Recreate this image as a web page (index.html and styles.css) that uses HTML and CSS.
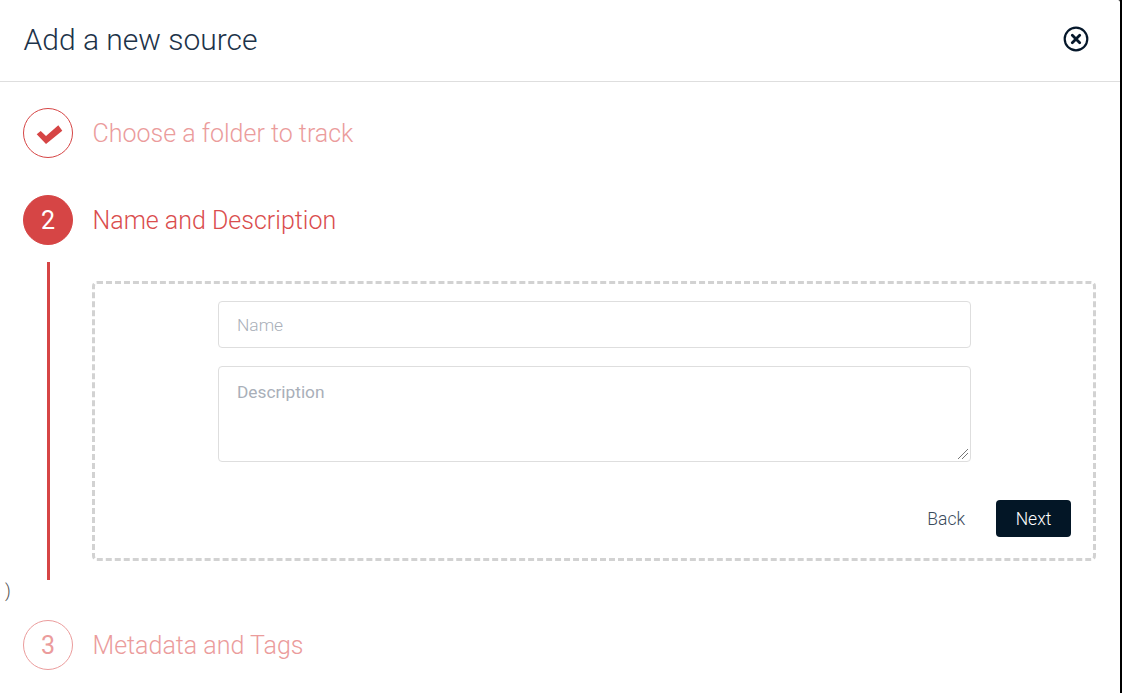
FILE: index.html
```html
<!DOCTYPE html>
<html lang="en">
<head>
<meta charset="utf-8">
<title>Add a new source</title>
<link rel="stylesheet" href="styles.css">
</head>
<body>
<div class="modal">
  <header class="modal-header">
    <h1 class="modal-title">Add a new source</h1>
    <button class="close" type="button" aria-label="Close">
      <svg viewBox="0 0 26 26" width="26" height="26" fill="none" stroke="#06182b">
        <circle cx="13" cy="13" r="11.3" stroke-width="2.2"/>
        <path d="M9.3 9.3l7.4 7.4M16.7 9.3l-7.4 7.4" stroke-width="2.8" stroke-linecap="round"/>
      </svg>
    </button>
  </header>
  <section class="step step-done">
    <span class="bubble">
      <svg viewBox="-3 -4 30 24" width="30" height="24" fill="#d64545">
        <path d="M0.7 9.3L4.7 6L10 11L22.3 0.3L26.3 5.7L10 19Z"/>
      </svg>
    </span>
    <h2 class="step-label">Choose a folder to track</h2>
  </section>
  <section class="step step-active">
    <span class="bubble">2</span>
    <h2 class="step-label">Name and Description</h2>
  </section>
  <div class="step-body">
    <div class="dashed">
      <form class="form">
        <input class="field" type="text" placeholder="Name">
        <textarea class="field area" placeholder="Description"></textarea>
      </form>
      <div class="actions">
        <button class="btn-back" type="button">Back</button>
        <button class="btn-next" type="button">Next</button>
      </div>
    </div>
  </div>
  <p class="stray">)</p>
  <section class="step step-todo">
    <span class="bubble">3</span>
    <h2 class="step-label">Metadata and Tags</h2>
  </section>
</div>
</body>
</html>
```
FILE: styles.css
```css
* { box-sizing: border-box; }
html, body { margin: 0; height: 100%; }
body {
  background: #000;
  font-family: Roboto, "Liberation Sans", sans-serif;
  overflow: hidden;
}
.modal {
  width: 1120px;
  height: 693px;
  background: #fff;
  border-top-right-radius: 2px;
  overflow: hidden;
}
.modal-header {
  height: 82px;
  border-bottom: 1px solid #dedede;
  display: flex;
  align-items: center;
  justify-content: space-between;
  padding: 0 32px 3px 23.5px;
}
.modal-title {
  margin: 0;
  font-size: 30px;
  font-weight: 300;
  color: #1d3349;
}
.close {
  display: flex;
  padding: 0;
  border: 0;
  background: none;
  position: relative;
  left: 1px;
  top: -0.5px;
}
.step {
  display: flex;
  align-items: center;
  gap: 19.5px;
  padding-left: 23px;
}
.step-done { margin-top: 26px; }
.step-active { margin-top: 37px; }
.bubble {
  width: 50px;
  height: 50px;
  border-radius: 50%;
  display: flex;
  align-items: center;
  justify-content: center;
  font-size: 25px;
  border: 1px solid #d64545;
}
.step-label {
  margin: 0;
  font-size: 25px;
  font-weight: 300;
  color: #da4d4d;
}
.step-done .step-label,
.step-todo .step-label { color: #eb9c9c; }
.step-active .bubble { background: #d64545; color: #fff; font-weight: 400; }
.step-todo .bubble { border-color: #eb9c9c; color: #eb9c9c; }
.step-body {
  margin: 17px 0 0 47px;
  width: 1049px;
  height: 318px;
  padding: 19px 0 0 42px;
  border-left: 3px solid #d64545;
}
.dashed {
  height: 280px;
  border: 3px dashed #d2d2d2;
  border-radius: 5px;
  padding: 17px 22px 0 23px;
  display: flex;
  flex-direction: column;
}
.form {
  width: 753px;
  margin: 0 auto;
  display: flex;
  flex-direction: column;
  gap: 18px;
}
.field {
  display: block;
  width: 100%;
  height: 47px;
  border: 1px solid #dedede;
  border-radius: 4px;
  padding: 1px 18px 0;
  font-family: Roboto, sans-serif;
  font-size: 17.4px;
  font-weight: 300;
  outline: none;
}
.field::placeholder { color: #a9afb9; opacity: 1; }
.area {
  height: 96px;
  padding: 15px 18px;
  font-size: 17.3px;
  font-weight: 400;
}
.area::-webkit-resizer {
  background: linear-gradient(135deg,
    transparent 59%, #777 59%, #777 64%,
    transparent 64%, transparent 75%, #777 75%, #777 80%, transparent 80%) no-repeat 0 0 / 13px 13px;
}
.actions {
  margin-top: 38px;
  display: flex;
  justify-content: flex-end;
  align-items: center;
  gap: 31px;
}
.btn-back, .btn-next {
  font-family: Roboto, sans-serif;
  font-size: 17.5px;
  font-weight: 300;
  border: 0;
  padding: 1px 0 0;
}
.btn-back { background: none; color: #3a4a5c; }
.btn-next {
  width: 75px;
  height: 37px;
  border-radius: 4px;
  background: #031626;
  color: #fff;
}
.stray {
  margin: 0;
  height: 40px;
  padding: 1px 0 0 5px;
  font-size: 17.6px;
  font-weight: 300;
  line-height: 21px;
  color: #555;
}
```
